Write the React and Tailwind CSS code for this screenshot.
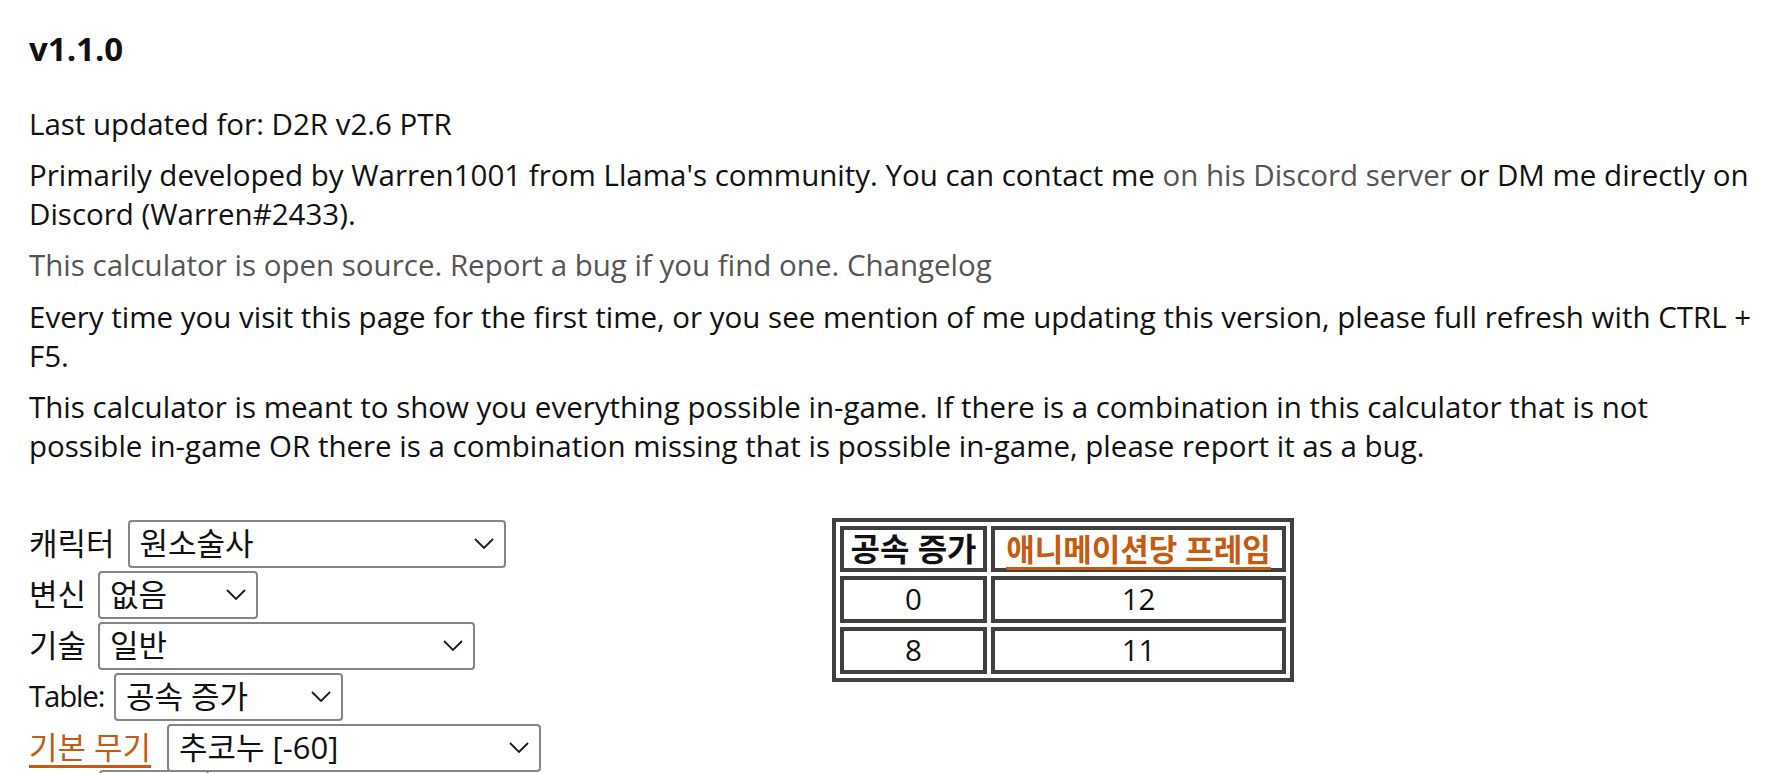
function Chevron() {
  return (
    <svg width="20" height="11" viewBox="0 0 20 11" className="shrink-0">
      <path d="M1 1 L10 10 L19 1" fill="none" stroke="#1a1a1a" strokeWidth="1.8" />
    </svg>
  );
}

function FakeSelect({ value, width }) {
  return (
    <div
      className={
        "flex h-[48px] items-center justify-between rounded-[4px] border-2 border-[#858585] bg-white pl-[10px] pr-[10px] " +
        width
      }
    >
      <span className="whitespace-nowrap text-[31px]">{value}</span>
      <Chevron />
    </div>
  );
}

const formRows = [
  { label: "캐릭터", value: "원소술사", labelWidth: "w-[98.5px]", selectWidth: "w-[378px]" },
  { label: "변신", value: "없음", labelWidth: "w-[69px]", selectWidth: "w-[160px]" },
  { label: "기술", value: "일반", labelWidth: "w-[69px]", selectWidth: "w-[377px]" },
  { label: "Table:", value: "공속 증가", labelWidth: "w-[85px]", selectWidth: "w-[229px]", latin: true },
  { label: "기본 무기", value: "추코누 [-60]", labelWidth: "w-[138px]", selectWidth: "w-[374px]", link: true },
];

const tableRows = [
  ["0", "12"],
  ["8", "11"],
];

export default function App() {
  return (
    <div className="h-[773px] overflow-hidden bg-white pl-[29px] pr-[8px] pt-[30px] font-['Open_Sans','Noto_Sans_CJK_KR',sans-serif] text-[29.5px] leading-[38.7px] text-[#111]">
      <h4 className="mb-[36px] text-[33px] font-bold">v1.1.0</h4>

      <p className="mb-[12.8px]">Last updated for: D2R v2.6 PTR</p>
      <p className="mb-[12.8px]">
        Primarily developed by Warren1001 from Llama's community. You can contact me{" "}
        <span className="text-[#555]">on his Discord server</span> or DM me directly on Discord
        (Warren#2433).
      </p>
      <p className="mb-[12.8px] text-[#555]">
        <span>This calculator is open source.</span> <span>Report a bug if you find one.</span>{" "}
        <span>Changelog</span>
      </p>
      <p className="mb-[12.8px]">
        Every time you visit this page for the first time, or you see mention of me updating this
        version, please full refresh with CTRL + F5.
      </p>
      <p className="mb-[12.8px]">
        This calculator is meant to show you everything possible in-game. If there is a combination
        in this calculator that is not possible in-game OR there is a combination missing that is
        possible in-game, please report it as a bug.
      </p>

      <div className="mt-[52.5px] flex items-start">
        <div className="flex w-[803px] shrink-0 flex-col">
          {formRows.map((row) => (
            <div key={row.label} className="flex h-[51px] items-center">
              <span
                className={
                  "shrink-0 whitespace-nowrap " +
                  row.labelWidth +
                  (row.latin ? " tracking-[-1.2px]" : " text-[31px]") +
                  (row.link ? " text-[#c55a11] underline underline-offset-[6px]" : "")
                }
              >
                {row.label}
              </span>
              <FakeSelect value={row.value} width={row.selectWidth} />
            </div>
          ))}
          {/* next control, only its top edge is on screen */}
          <div className="-mt-[3px] flex h-[51px] items-start">
            <span className="w-[70px] shrink-0" />
            <div className="h-[48px] w-[110px] rounded-[4px] border-2 border-[#858585] bg-white" />
          </div>
        </div>

        <div className="grid grid-cols-[147px_295px] gap-[4px] border-4 border-[#404040] bg-white p-[4px]">
          <div className="flex h-[46px] items-center justify-center border-4 border-[#404040] text-[32px] font-bold whitespace-nowrap">
            공속 증가
          </div>
          <div className="flex h-[46px] items-center justify-center border-4 border-[#404040] text-[31px] font-bold whitespace-nowrap text-[#c55a11] underline underline-offset-[6px]">
            애니메이션당 프레임
          </div>
          {tableRows.map((r) =>
            r.map((cell, i) => (
              <div
                key={r[0] + "-" + i}
                className="flex h-[47px] items-center justify-center border-4 border-[#404040]"
              >
                {cell}
              </div>
            ))
          )}
        </div>
      </div>
    </div>
  );
}
